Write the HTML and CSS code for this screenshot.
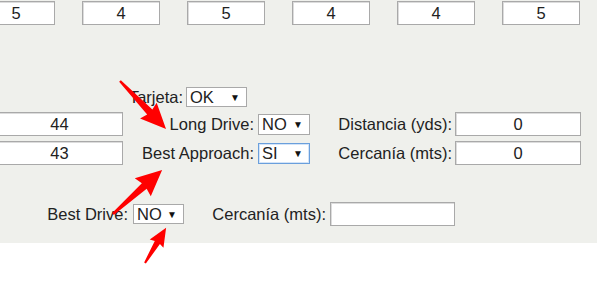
FILE: index.html
```html
<!DOCTYPE html>
<html lang="es">
<head>
    <meta charset="UTF-8">
    <meta name="viewport" content="width=device-width, initial-scale=1.0">
    <title>Tarjeta de juego</title>
    <link rel="stylesheet" href="styles.css">
</head>
<body>
    <div class="panel">
        <div class="scores">
            <input class="score" type="text" value="5">
            <input class="score" type="text" value="4">
            <input class="score" type="text" value="5">
            <input class="score" type="text" value="4">
            <input class="score" type="text" value="4">
            <input class="score" type="text" value="5">
        </div>

        <div class="row rowTarjeta">
            <label class="lbl lblTarjeta">Tarjeta:</label>
            <span class="pick pickWide"><select><option>OK</option></select></span>
        </div>

        <div class="row rowStats">
            <input class="total" type="text" value="44">
            <label class="lbl lblMid">Long Drive:</label>
            <span class="pick"><select><option>NO</option></select></span>
            <label class="lbl lblRight">Distancia (yds):</label>
            <input class="meas" type="text" value="0">
        </div>

        <div class="row rowStats">
            <input class="total" type="text" value="43">
            <label class="lbl lblMid">Best Approach:</label>
            <span class="pick focused"><select><option>SI</option></select></span>
            <label class="lbl lblRight">Cercanía (mts):</label>
            <input class="meas" type="text" value="0">
        </div>

        <div class="row rowBest">
            <label class="lbl lblBest">Best Drive:</label>
            <span class="pick pickSmall"><select><option>NO</option></select></span>
            <label class="lbl lblBestRight">Cercanía (mts):</label>
            <input class="measSmall" type="text" value="">
        </div>
    </div>

    <!-- annotation arrows drawn over the form -->
    <svg class="marks" width="597" height="285" viewBox="0 0 597 285">
        <polygon class="arrow" transform="translate(120 81) rotate(46.2)"
                 points="0,-1.2 43,-3.6 41,-11.5 66.5,0 41,11.5 43,3.6 0,1.2"/>
        <polygon class="arrow" transform="translate(113 214) rotate(-41.9)"
                 points="0,-1.2 42,-3.6 40,-12 66,0 40,12 42,3.6 0,1.2"/>
        <polygon class="arrow" transform="translate(145 263) rotate(-59)"
                 points="0,-1 24,-3 22.5,-8 41,0 22.5,8 24,3 0,1"/>
    </svg>
</body>
</html>
```

FILE: styles.css
```css
* {
    box-sizing: border-box;
}

html {
    overflow: hidden;
}

body {
    margin: 0;
    min-height: 285px;
    font-family: "Liberation Sans", Arial, sans-serif;
    font-size: 16.5px;
    color: #222;
    background-color: #fff;
    position: relative;
}

.panel {
    background-color: #eff0ec;
    padding: 1px 0 17px 0;
    overflow: hidden;
}

input[type="text"] {
    height: 24px;
    border: 1px solid #a9a9a9;
    box-shadow: inset 1px 1px 0 #dcdcdc;
    background-color: #fff;
    font-family: inherit;
    font-size: 16.5px;
    color: #222;
    text-align: center;
    padding: 0;
    margin: 0;
}

.scores {
    display: flex;
    gap: 27px;
    margin-left: -23px;
}

.score {
    width: 78px;
    flex: none;
}

.row {
    display: flex;
    align-items: center;
}

.rowTarjeta {
    margin-top: 62px;
    height: 20px;
}

.rowStats {
    margin-top: 5px;
    height: 24px;
}

.rowBest {
    margin-top: 37px;
    height: 24px;
}

.lbl {
    flex: none;
    text-align: right;
    white-space: nowrap;
}

.lblTarjeta {
    width: 186px;
    padding-right: 3px;
}

.lblMid {
    width: 135px;
    padding-right: 4px;
}

.lblRight {
    width: 145px;
    padding-right: 3px;
}

.lblBest {
    width: 133px;
    padding-right: 5px;
}

.lblBestRight {
    width: 146px;
    padding-right: 4px;
}

.total {
    width: 127px;
    margin-left: -4px !important;
    flex: none;
}

.meas {
    width: 126px;
    flex: none;
}

.measSmall {
    width: 125px;
    flex: none;
}

.pick {
    position: relative;
    flex: none;
    width: 52px;
    height: 21px;
    border: 1px solid #a9a9a9;
    background-color: #fff;
}

.pickWide {
    width: 61px;
    height: 20px;
}

.pickSmall {
    width: 51px;
    height: 20px;
}

.pick.focused {
    border-color: #6a9fdc;
    box-shadow: inset 0 0 0 1px #d3e4f8;
}

.pick select {
    appearance: none;
    -webkit-appearance: none;
    border: none;
    background: transparent;
    width: 100%;
    height: 100%;
    padding: 0 0 0 3px;
    margin: 0;
    font-family: inherit;
    font-size: 16.5px;
    color: #222;
    outline: none;
}

.pick::after {
    content: "\25BC";
    position: absolute;
    right: 6px;
    top: 50%;
    transform: translateY(-50%);
    font-size: 10px;
    color: #111;
    pointer-events: none;
}

.marks {
    position: absolute;
    left: 0;
    top: 0;
    pointer-events: none;
}

.arrow {
    fill: #f00;
}
```
